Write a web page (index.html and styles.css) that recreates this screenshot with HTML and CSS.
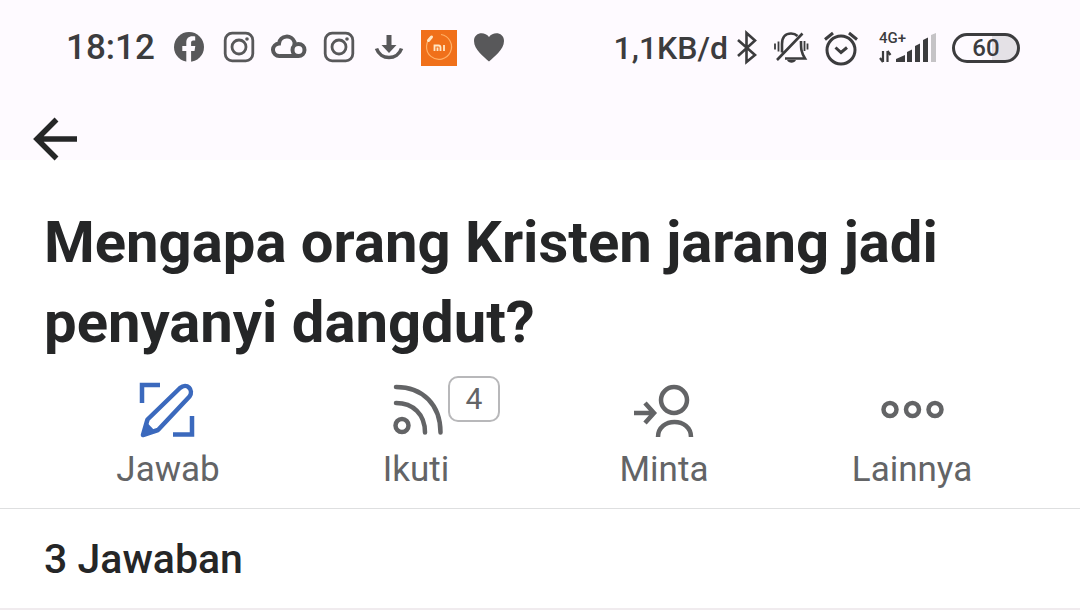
FILE: index.html
```
<!DOCTYPE html>
<html lang="id">
<head>
    <meta charset="UTF-8">
    <meta name="viewport" content="width=device-width, initial-scale=1.0">
    <title>Mengapa orang Kristen jarang jadi penyanyi dangdut?</title>
    <link rel="stylesheet" href="styles.css">
</head>
<body>
    <header class="top">
        <div class="status-bar">
            <div class="status-left">
                <span class="status-text clock">18:12</span>
                <svg class="status-icon" viewBox="0 0 36 36">
                    <circle cx="18" cy="17" r="15" fill="#58585a"/>
                    <path d="M15.300 33V21h-4v-5h4v-3.500c0-4 2.400-6.200 6-6.200 1.500 0 2.900.2 2.900.2v4h-1.900c-1.700 0-2.200 1-2.200 2.200V16h4.200l-.8 5h-3.400v12z" fill="#fefaff"/>
                </svg>
                <svg class="status-icon line" viewBox="0 0 36 36">
                    <rect x="4.200" y="3.200" width="27.600" height="27.600" rx="7"/>
                    <circle cx="18" cy="17" r="7"/>
                    <circle cx="26" cy="9" r="1.800" fill="#58585a" stroke="none"/>
                </svg>
                <svg class="status-icon cloud" viewBox="0 0 36 36">
                    <path d="M8.500 26a6 6 0 0 1-.5-12.500A8 8 0 0 1 23.500 12V15M8.500 26H27.500"/>
                    <circle cx="27.500" cy="20" r="6"/>
                </svg>
                <svg class="status-icon line" viewBox="0 0 36 36">
                    <rect x="4.200" y="3.200" width="27.600" height="27.600" rx="7"/>
                    <circle cx="18" cy="17" r="7"/>
                    <circle cx="26" cy="9" r="1.800" fill="#58585a" stroke="none"/>
                </svg>
                <svg class="status-icon" viewBox="0 0 36 36">
                    <path d="M15.500 5h5v10h5L18 23l-7.500-8h5z" fill="#58585a"/>
                    <path d="M5.500 18.500c4 12 21 12 25 0" fill="none" stroke="#58585a" stroke-width="3.600"/>
                </svg>
                <svg class="status-icon" viewBox="0 0 36 36">
                    <rect width="36" height="36" fill="#f0701a"/>
                    <path d="M11 6.500a12.500 12.500 0 1 0 9-2" fill="none" stroke="#ffb066" stroke-width="1.200"/>
                    <path d="M7.500 10.500l3-3.500" stroke="#ffe6c4" stroke-width="3" stroke-linecap="round"/>
                    <path d="M13.500 21v-5.500h4q2 0 2 2V21M16.500 17.500V21M23 15v6" fill="none" stroke="#ffe6c4" stroke-width="1.800"/>
                </svg>
                <svg class="status-icon" viewBox="0 0 36 36">
                    <path d="M18 31.500C13 27 3 19.500 3 11 3 2.500 13.500 1 18 7c4.500-6 15-4.500 15 4C33 19.500 23 27 18 31.500z" fill="#58585a"/>
                </svg>
            </div>
            <div class="status-right">
                <span class="status-text speed">1,1KB/d</span>
                <svg class="bluetooth dark" viewBox="0 0 24 36">
                    <path d="M3 10l17 15-8.500 7V3L20 10.500 3 26"/>
                </svg>
                <svg class="status-icon dark" viewBox="0 0 36 36">
                    <path d="M9 22.500V14C9 6.500 13 3.500 18 3.500c3 0 5 1 6.500 2.500M28 11c0 8 0 11 4 17.500H12M29.500 3.500L4 30"/>
                    <path d="M14 30h9c-1.500 3.600-7.500 3.600-9 0z" fill="#3c3c3e" stroke="none"/>
                    <path d="M2 13.500v6M5.500 11.500v10M34.500 13.500v6M31.500 11v10" stroke-width="1.800"/>
                </svg>
                <svg class="status-icon dark" viewBox="0 0 36 36">
                    <circle cx="18" cy="20" r="14" stroke-width="3"/>
                    <path d="M12.500 17.500l5.500 5 6-5M2 9.500l8-6.500M34 9.500l-8-6.500" stroke-width="3"/>
                </svg>
                <div class="signal">
                    <span class="network">4G+</span>
                    <svg class="bars" viewBox="0 0 60 36">
                        <path d="M5 21v11M2 28l3 4M9.500 32V21M12.500 25L9.500 21" fill="none" stroke="#3c3c3e" stroke-width="2.200"/>
                        <path d="M18 32v-3l9-4v7zM29 32V22l5-2.500V32zM37 32V16l5-2.500V32zM45 32V10l5-2.500V32z" fill="#3c3c3e"/>
                        <path d="M53 32V5l5-2v29z" fill="#c5c3c6"/>
                    </svg>
                </div>
                <span class="battery">60</span>
            </div>
        </div>
        <nav class="toolbar">
            <button class="back" aria-label="Kembali">
                <svg viewBox="0 0 44 44">
                    <path d="M44 22H4M23.500 2.500L4 22l19.500 19.500" fill="none" stroke="#252627" stroke-width="5.500"/>
                </svg>
            </button>
        </nav>
    </header>

    <main>
        <h1 class="question">Mengapa orang Kristen jarang jadi penyanyi dangdut?</h1>

        <div class="actions">
            <button class="action">
                <svg class="action-icon answer" viewBox="0 0 60 60">
                    <path d="M4 23V5H22M54 36v18.500H35"/>
                    <path d="M5 55l4.500-15.500L42 8c7-6 14 2 9.500 8.500L20 50z" stroke-linejoin="round"/>
                    <path d="M5 55l3.500-13 8.500 9z" fill="#3b69bd" stroke="none"/>
                </svg>
                <span>Jawab</span>
            </button>
            <button class="action">
                <svg class="action-icon" viewBox="0 0 60 60">
                    <circle cx="16" cy="45.500" r="6.500"/>
                    <path d="M10 23c17 0 29 11 29 29.500M10 7c27 0 44.500 18 44.500 45.500" stroke-linecap="round"/>
                </svg>
                <span class="badge">4</span>
                <span>Ikuti</span>
            </button>
            <button class="action">
                <svg class="action-icon" viewBox="0 0 60 60">
                    <circle cx="40" cy="20" r="13"/>
                    <path d="M24 57c0-20 33-20 33 0M0 33h20M11 23l9 10-9 10"/>
                </svg>
                <span>Minta</span>
            </button>
            <button class="action">
                <svg class="action-icon more" viewBox="0 0 64 60">
                    <circle cx="10" cy="29.500" r="6.500"/>
                    <circle cx="32.500" cy="29.500" r="6.500"/>
                    <circle cx="55" cy="29.500" r="6.500"/>
                </svg>
                <span>Lainnya</span>
            </button>
        </div>

        <h2 class="answers">3 Jawaban</h2>
    </main>
</body>
</html>
```
FILE: styles.css
```
* {
    box-sizing: border-box;
}
body {
    margin: 0;
    background-color: #fff;
    color: #252627;
    font-family: Roboto, "Liberation Sans", sans-serif;
}
svg {
    display: block;
    flex: none;
}
button {
    padding: 0;
    border: none;
    background: none;
    color: inherit;
    font-family: inherit;
    cursor: pointer;
}
.top {
    background-color: #fefaff;
}
.status-bar {
    display: flex;
    justify-content: space-between;
    height: 96px;
    padding: 0 60px 0 66px;
    color: #3c3c3e;
}
.status-left,
.status-right {
    display: flex;
    align-items: center;
    gap: 14px;
}
.status-text {
    font-weight: 500;
    line-height: 40px;
}
.clock {
    margin-right: 2px;
    font-size: 35px;
}
.speed {
    margin-right: -7px;
    font-size: 32px;
}
.status-icon {
    width: 36px;
    height: 36px;
}
.line {
    fill: none;
    stroke: #58585a;
    stroke-width: 2.8;
}
.cloud {
    fill: none;
    stroke: #58585a;
    stroke-width: 4;
}
.dark {
    fill: none;
    stroke: #3c3c3e;
    stroke-width: 2.6;
}
.bluetooth {
    width: 24px;
    height: 36px;
}
.signal {
    position: relative;
    width: 60px;
    height: 36px;
    margin-left: 5px;
}
.network {
    position: absolute;
    top: 0;
    left: 1px;
    font-size: 15px;
    font-weight: 500;
    line-height: 16px;
}
.bars {
    width: 60px;
    height: 36px;
}
.battery {
    width: 68px;
    height: 30px;
    border: 3px solid #3c3c3e;
    border-radius: 15px;
    background: linear-gradient(to right, #fefaff 60%, #e4e1e6 60%);
    font-size: 24px;
    font-weight: 500;
    line-height: 25px;
    text-align: center;
}
.toolbar {
    height: 64px;
    padding: 21px 33px;
}
.back,
.back svg {
    display: block;
    width: 44px;
    height: 44px;
}
.question {
    margin: 0;
    padding: 42px 44px 0;
    font-size: 58px;
    font-weight: 700;
    line-height: 80px;
}
.actions {
    display: grid;
    grid-template-columns: repeat(4, 1fr);
    padding: 18px 44px 17px;
    border-bottom: 1px solid #dedfe0;
}
.action {
    position: relative;
    display: flex;
    flex-direction: column;
    align-items: center;
    gap: 9px;
    color: #636466;
    font-size: 35px;
    line-height: 42px;
}
.action-icon {
    width: 60px;
    height: 60px;
    fill: none;
    stroke: #636466;
    stroke-width: 4.5;
}
.answer {
    stroke: #3b69bd;
}
.more {
    width: 64px;
}
.badge {
    position: absolute;
    top: -4px;
    left: calc(50% + 32px);
    width: 52px;
    height: 46px;
    border: 2px solid #b8b8ba;
    border-radius: 10px;
    background-color: #fff;
    font-size: 30px;
    line-height: 42px;
}
.answers {
    margin: 0;
    padding: 25px 44px 24px;
    border-bottom: 2px solid #f0ebee;
    font-size: 41px;
    font-weight: 500;
    line-height: 50px;
}
```
